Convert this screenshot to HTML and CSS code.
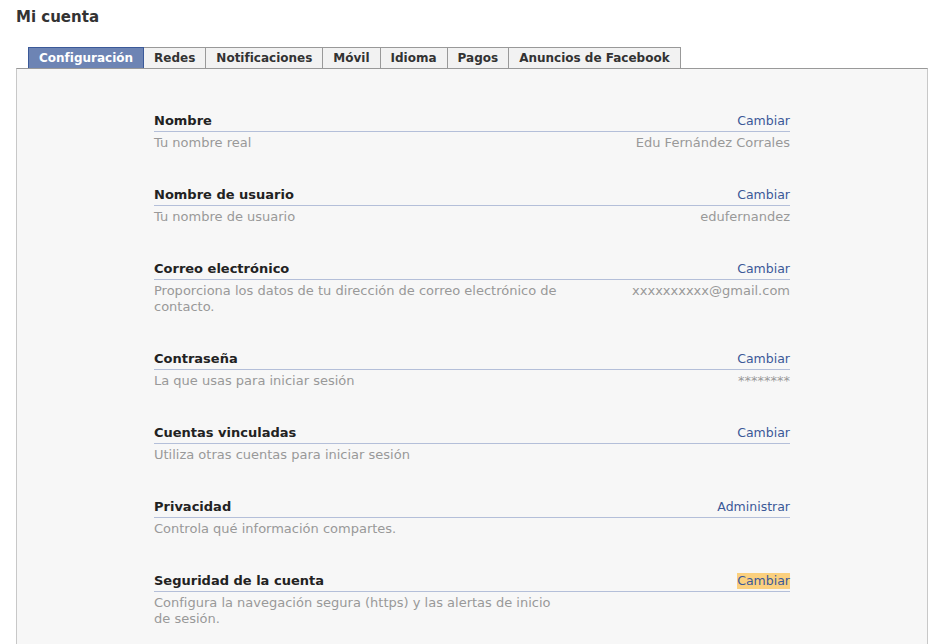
FILE: index.html
```html
<!DOCTYPE html>
<html lang="es">
<head>
<meta charset="utf-8">
<title>Mi cuenta</title>
<link rel="stylesheet" href="styles.css">
</head>
<body>
<div class="page">
  <h1 class="title">Mi cuenta</h1>
  <ul class="tabs">
    <li class="tab active">Configuración</li>
    <li class="tab">Redes</li>
    <li class="tab">Notificaciones</li>
    <li class="tab">Móvil</li>
    <li class="tab">Idioma</li>
    <li class="tab">Pagos</li>
    <li class="tab">Anuncios de Facebook</li>
  </ul>
  <div class="panel">
    <div class="settings">
      <div class="row">
        <div class="head"><span class="label">Nombre</span><a class="link">Cambiar</a></div>
        <div class="info"><span class="desc">Tu nombre real</span><span class="value">Edu Fernández Corrales</span></div>
      </div>
      <div class="row">
        <div class="head"><span class="label">Nombre de usuario</span><a class="link">Cambiar</a></div>
        <div class="info"><span class="desc">Tu nombre de usuario</span><span class="value">edufernandez</span></div>
      </div>
      <div class="row">
        <div class="head"><span class="label">Correo electrónico</span><a class="link">Cambiar</a></div>
        <div class="info"><span class="desc">Proporciona los datos de tu dirección de correo electrónico de contacto.</span><span class="value">xxxxxxxxxx@gmail.com</span></div>
      </div>
      <div class="row">
        <div class="head"><span class="label">Contraseña</span><a class="link">Cambiar</a></div>
        <div class="info"><span class="desc">La que usas para iniciar sesión</span><span class="value">********</span></div>
      </div>
      <div class="row">
        <div class="head"><span class="label">Cuentas vinculadas</span><a class="link">Cambiar</a></div>
        <div class="info"><span class="desc">Utiliza otras cuentas para iniciar sesión</span></div>
      </div>
      <div class="row">
        <div class="head"><span class="label">Privacidad</span><a class="link">Administrar</a></div>
        <div class="info"><span class="desc">Controla qué información compartes.</span></div>
      </div>
      <div class="row">
        <div class="head"><span class="label">Seguridad de la cuenta</span><a class="link highlight">Cambiar</a></div>
        <div class="info"><span class="desc">Configura la navegación segura (https) y las alertas de inicio de sesión.</span></div>
      </div>
    </div>
  </div>
</div>
</body>
</html>
```
FILE: styles.css
```css
html, body {
  margin: 0;
  padding: 0;
  background: #ffffff;
  overflow: hidden;
}
body {
  font-family: "DejaVu Sans", "Liberation Sans", sans-serif;
  font-size: 12px;
  color: #333333;
}
.page {
  padding: 8px 9px 0 16px;
}
.title {
  margin: 0;
  font-size: 15px;
  line-height: 18px;
  font-weight: bold;
  color: #333333;
}
.tabs {
  list-style: none;
  margin: 21px 0 0 12px;
  padding: 0;
  display: flex;
}
.tab {
  height: 20px;
  line-height: 20px;
  padding: 0 10px;
  border: 1px solid #999999;
  border-bottom: none;
  border-left: none;
  background: #f2f2f2;
  font-weight: bold;
  font-size: 12px;
  color: #333333;
}
.tab.active {
  background: #6d84b4;
  color: #ffffff;
  border: 1px solid #3b5998;
  border-bottom: none;
}
.panel {
  border-top: 1px solid #999999;
  border-left: 1px solid #c8c8c8;
  border-right: 1px solid #c8c8c8;
  background: #f7f7f7;
  height: 600px;
  padding-top: 44px;
}
.settings {
  width: 636px;
  margin: 0 auto;
  display: flex;
  flex-direction: column;
  gap: 36px;
}
.head {
  display: flex;
  justify-content: space-between;
  align-items: flex-end;
  border-bottom: 1px solid #b4bfd9;
  padding-bottom: 2px;
  line-height: 16px;
}
.label {
  font-weight: bold;
  font-size: 13px;
  color: #222222;
}
.link {
  color: #3b5998;
  font-size: 12.5px;
}
.highlight {
  background: #fbd07e;
}
.info {
  display: flex;
  justify-content: space-between;
  padding-top: 3px;
  line-height: 16px;
  font-size: 13px;
  color: #999999;
}
.desc {
  max-width: 405px;
}
.value {
  color: #999999;
  text-align: right;
}
```
